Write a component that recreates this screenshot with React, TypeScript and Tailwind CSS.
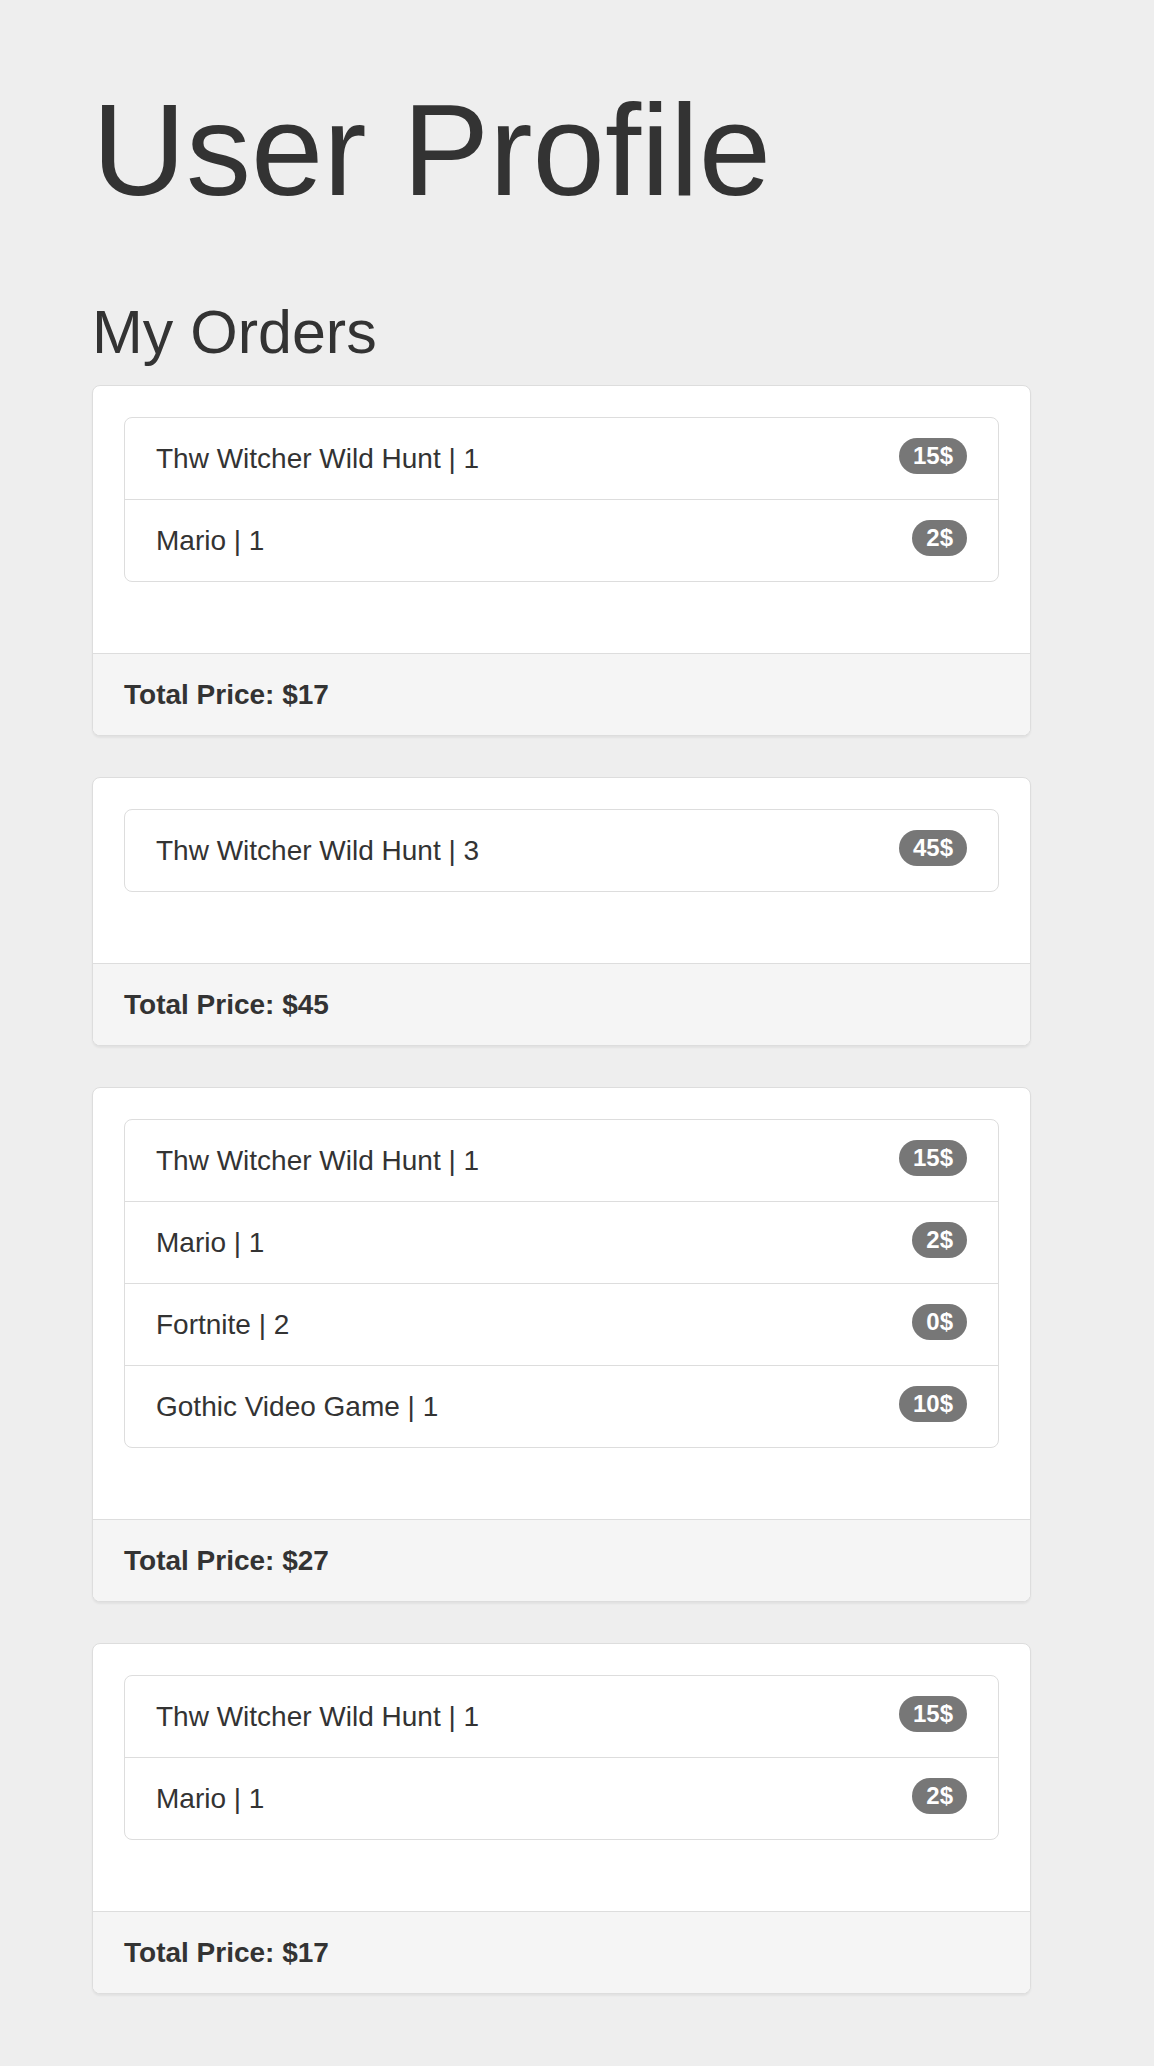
const orders = [
  {
    items: [
      { name: "Thw Witcher Wild Hunt", qty: 1, price: 15 },
      { name: "Mario", qty: 1, price: 2 },
    ],
    total: 17,
  },
  {
    items: [{ name: "Thw Witcher Wild Hunt", qty: 3, price: 45 }],
    total: 45,
  },
  {
    items: [
      { name: "Thw Witcher Wild Hunt", qty: 1, price: 15 },
      { name: "Mario", qty: 1, price: 2 },
      { name: "Fortnite", qty: 2, price: 0 },
      { name: "Gothic Video Game", qty: 1, price: 10 },
    ],
    total: 27,
  },
  {
    items: [
      { name: "Thw Witcher Wild Hunt", qty: 1, price: 15 },
      { name: "Mario", qty: 1, price: 2 },
    ],
    total: 17,
  },
];

type Order = (typeof orders)[number];

function OrderCard({ order }: { order: Order }) {
  return (
    <div className="rounded-[8px] border border-[#ddd] bg-white shadow-[0_2px_2px_rgba(0,0,0,0.05)]">
      <div className="p-[31px]">
        <ul className="mb-[40px] divide-y divide-[#ddd] rounded-[8px] border border-[#ddd]">
          {order.items.map((item, i) => (
            <li
              key={i}
              className="flex items-start justify-between px-[31px] py-[20px] text-[28px] leading-[41px] text-[#333]"
            >
              <span>
                {item.name} | {item.qty}
              </span>
              <span className="rounded-full bg-[#777] px-[14px] py-[6px] text-[24px] font-bold leading-none text-white">
                {item.price}$
              </span>
            </li>
          ))}
        </ul>
      </div>
      <div className="rounded-b-[7px] border-t border-[#ddd] bg-[#f5f5f5] px-[31px] py-[20px] text-[28px] font-bold leading-[41px] text-[#333]">
        Total Price: ${order.total}
      </div>
    </div>
  );
}

export default function App() {
  return (
    <div className="min-h-screen bg-[#eee] pb-[70px] pl-[92px] pt-[80px] font-['Liberation_Sans',Arial,sans-serif] text-[#333]">
      <h1 className="text-[130px] font-normal leading-[141px]">User Profile</h1>
      <h2 className="mb-[20px] mt-[78px] text-[61px] font-normal leading-[66px]">My Orders</h2>
      <div className="flex w-[939px] flex-col gap-[41px]">
        {orders.map((order, i) => (
          <OrderCard key={i} order={order} />
        ))}
      </div>
    </div>
  );
}
